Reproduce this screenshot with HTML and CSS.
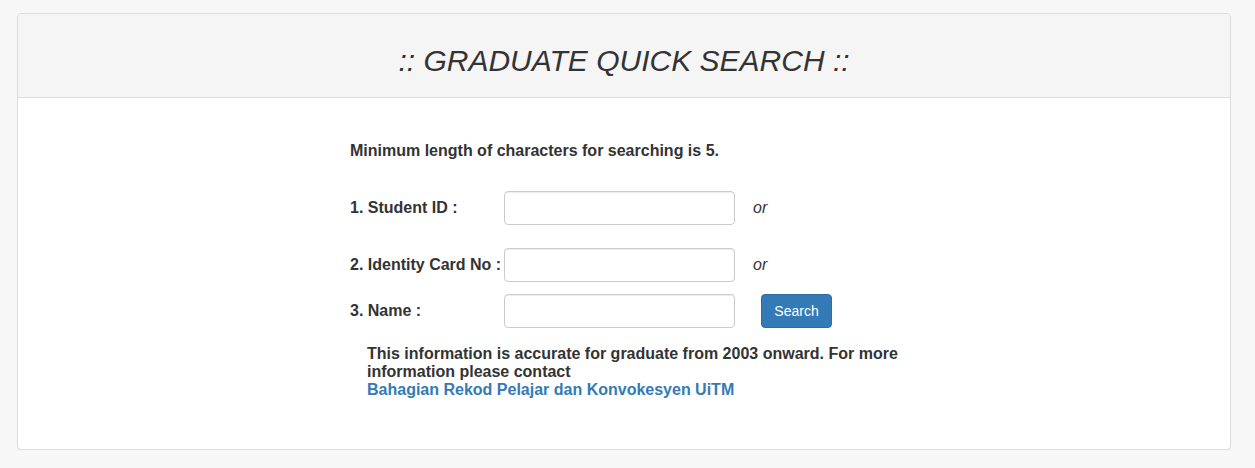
FILE: index.html
```html
<!DOCTYPE html>
<html>
<head>
<meta charset="utf-8">
<link rel="stylesheet" href="styles.css">
</head>
<body>
<div class="panel">
  <div class="panel-heading">
    <h2 class="title">:: GRADUATE QUICK SEARCH ::</h2>
  </div>
  <div class="panel-body">
    <div class="form">
      <p class="note">Minimum length of characters for searching is 5.</p>
      <div class="row row1">
        <label class="lbl">1. Student ID :</label>
        <input class="field" type="text">
        <span class="or">or</span>
      </div>
      <div class="row row2">
        <label class="lbl">2. Identity Card No :</label>
        <input class="field" type="text">
        <span class="or">or</span>
      </div>
      <div class="row row3">
        <label class="lbl">3. Name :</label>
        <input class="field" type="text">
        <button class="btn" type="button">Search</button>
      </div>
      <div class="info">
        This information is accurate for graduate from 2003 onward. For more information please contact<br>
        <a class="link" href="#">Bahagian Rekod Pelajar dan Konvokesyen UiTM</a>
      </div>
    </div>
  </div>
</div>
</body>
</html>
```

FILE: styles.css
```css
html, body {
  margin: 0;
  padding: 0;
}
body {
  background: #f7f7f7;
  font-family: "Liberation Sans", Arial, sans-serif;
  font-size: 16px;
  color: #333;
  padding: 13px 24px 0 17px;
}
.panel {
  background: #fff;
  border: 1px solid #ddd;
  border-radius: 4px;
  box-shadow: 0 1px 1px rgba(0,0,0,0.05);
  height: 437px;
  box-sizing: border-box;
  overflow: hidden;
}
.panel-heading {
  background: #f5f5f5;
  border-bottom: 1px solid #ddd;
  height: 84px;
  box-sizing: border-box;
  display: flex;
  align-items: center;
  justify-content: center;
}
.title {
  margin: 0;
  font-weight: normal;
  font-style: italic;
  font-size: 30px;
  color: #333;
  padding-top: 10px;
}
.panel-body {
  padding: 0 0 0 332px;
}
.form {
  padding-top: 43px;
}
.note {
  margin: 0;
  font-weight: bold;
  line-height: 20px;
}
.row {
  display: grid;
  grid-template-columns: 154px 231px auto;
  align-items: center;
  height: 34px;
}
.row1 { margin-top: 30px; }
.row2 { margin-top: 23px; }
.row3 { margin-top: 12px; }
.lbl {
  font-weight: bold;
}
.field {
  width: 231px;
  height: 34px;
  box-sizing: border-box;
  border: 1px solid #ccc;
  border-radius: 4px;
  box-shadow: inset 0 1px 1px rgba(0,0,0,0.075);
  margin: 0;
  padding: 6px 12px;
  font: inherit;
}
.or {
  font-style: italic;
  margin-left: 18px;
}
.btn {
  margin-left: 26px;
  width: 71px;
  height: 34px;
  background: #337ab7;
  border: 1px solid #2e6da4;
  border-radius: 4px;
  color: #fff;
  font-family: "Liberation Sans", Arial, sans-serif;
  font-size: 14px;
  padding: 0;
}
.info {
  margin: 17px 0 0 17px;
  width: 550px;
  font-weight: bold;
  line-height: 18px;
}
.link {
  color: #337ab7;
  text-decoration: none;
}
```
